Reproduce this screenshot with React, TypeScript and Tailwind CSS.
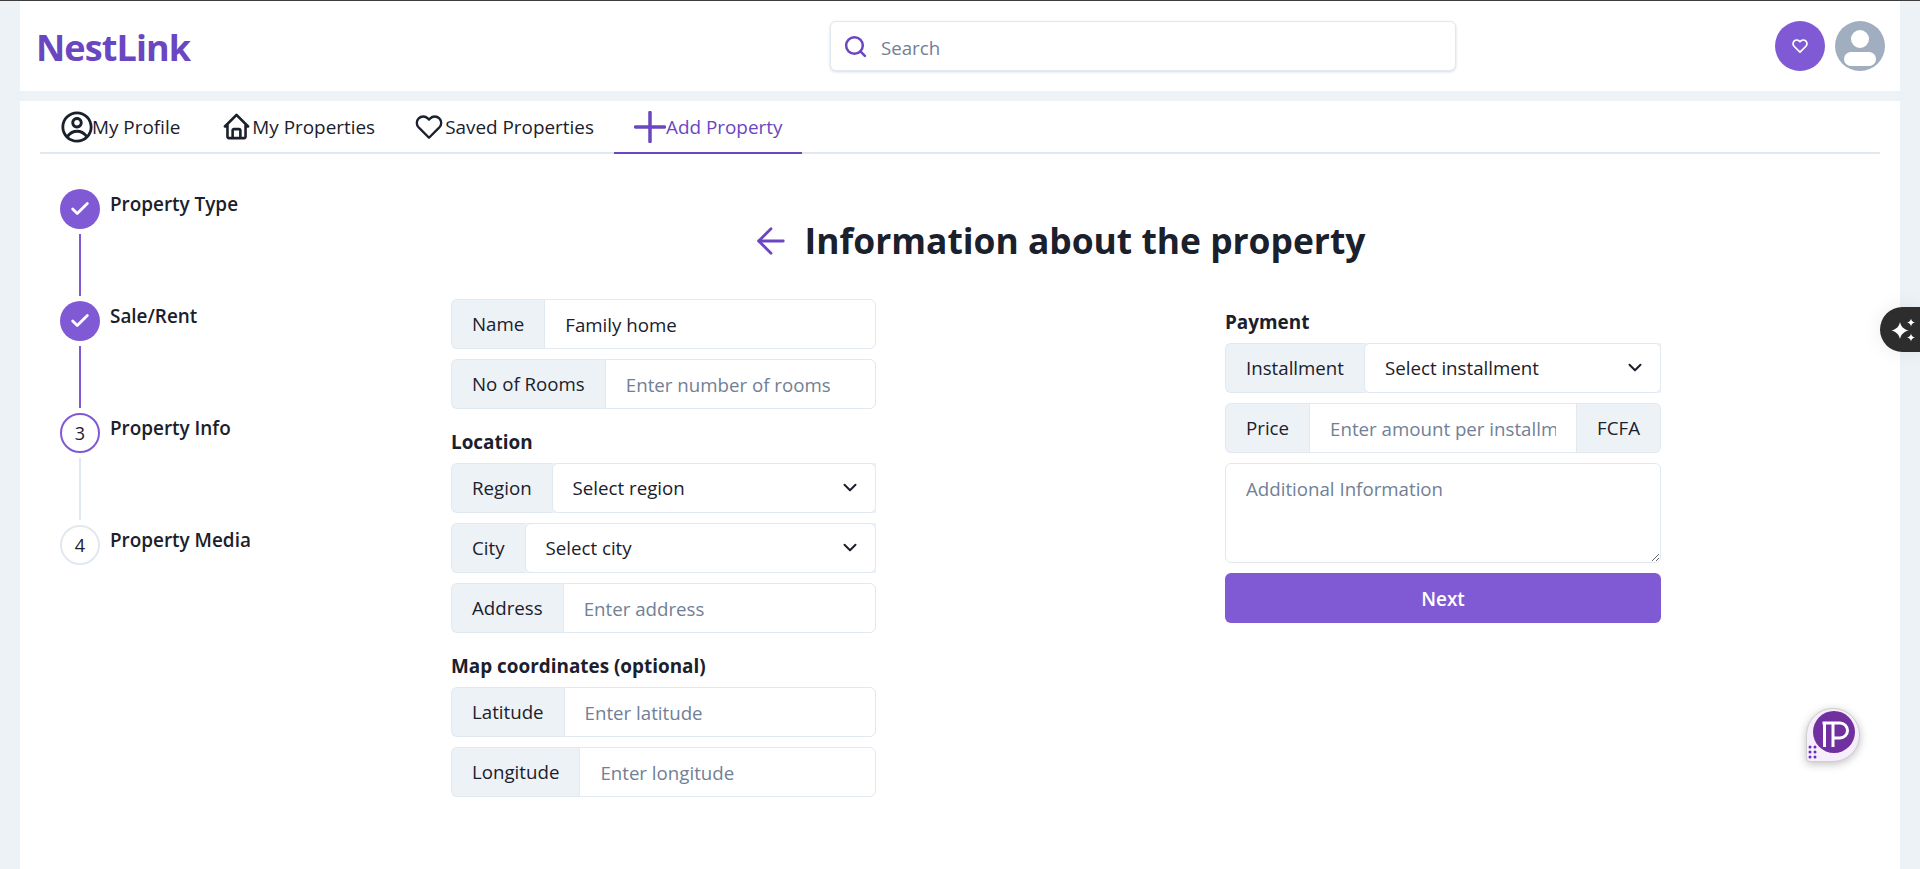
import { ChevronDown } from "lucide-react";
import { BiHome } from "react-icons/bi";
import { CgProfile } from "react-icons/cg";
import { FiArrowLeft, FiCheck, FiHeart, FiSearch } from "react-icons/fi";

const font = "font-['Open_Sans','Noto_Sans',sans-serif]";

function Addon({ children, right }: { children: React.ReactNode; right?: boolean }) {
  return (
    <div
      className={`flex h-full shrink-0 items-center border border-[#E2E8F0] bg-[#EDF2F7] px-5 text-[18.7px] text-[#1A202C] ${
        right ? "rounded-r-md border-l-0" : "rounded-l-md border-r-0"
      }`}
    >
      {children}
    </div>
  );
}

function TextRow({ label, placeholder, value, unit }: { label: string; placeholder: string; value?: string; unit?: string }) {
  return (
    <div className="flex h-[50px] w-full items-center">
      <Addon>{label}</Addon>
      <input
        readOnly
        value={value}
        placeholder={placeholder}
        className={`h-full w-full min-w-0 border border-[#E2E8F0] bg-white px-5 text-[18.7px] text-[#1A202C] outline-none placeholder:text-[#718096] ${
          unit ? "" : "rounded-r-md"
        }`}
      />
      {unit && <Addon right>{unit}</Addon>}
    </div>
  );
}

function SelectRow({ label, placeholder }: { label: string; placeholder: string }) {
  return (
    <div className="flex h-[50px] w-full items-center">
      <Addon>{label}</Addon>
      <div className="relative h-full w-full min-w-0 bg-[#EDF2F7]">
        <select className="h-full w-full appearance-none rounded-md border border-[#E2E8F0] bg-white px-5 text-[18.7px] text-[#1A202C] outline-none">
          <option>{placeholder}</option>
        </select>
        <ChevronDown size={22} strokeWidth={2.2} className="pointer-events-none absolute top-1/2 right-[15px] -translate-y-[52%] text-[#1A202C]" />
      </div>
    </div>
  );
}

function GroupLabel({ children, className }: { children: React.ReactNode; className?: string }) {
  return <p className={`-mb-0.5 text-[18.9px] leading-[26px] font-bold text-[#1A202C] ${className ?? ""}`}>{children}</p>;
}

const steps = [
  { title: "Property Type", state: "done", line: true },
  { title: "Sale/Rent", state: "done", line: true },
  { title: "Property Info", state: "active", line: false },
  { title: "Property Media", state: "todo", line: false },
];

function Stepper() {
  return (
    <div className="flex w-[431px] shrink-0 flex-col pt-[35px] pl-10">
      {steps.map((step, i) => (
        <div key={step.title} className="flex gap-2.5">
          <div className="flex flex-col items-center">
            {step.state === "done" ? (
              <div className="flex h-10 w-10 items-center justify-center rounded-full bg-[#805AD5] text-white">
                <FiCheck size={22} strokeWidth={3} />
              </div>
            ) : (
              <div
                className={`flex h-10 w-10 items-center justify-center rounded-full border-2 bg-white text-[18px] text-[#1A202C] ${
                  step.state === "active" ? "border-[#805AD5]" : "border-[#E2E8F0]"
                }`}
              >
                {i + 1}
              </div>
            )}
            {i < steps.length - 1 && (
              <div className={`my-[5px] h-[62px] w-0.5 ${step.line ? "bg-[#805AD5]" : "bg-[#E2E8F0]"}`} />
            )}
          </div>
          <p className="text-[18.9px] leading-[31px] font-semibold text-[#1A202C]">{step.title}</p>
        </div>
      ))}
    </div>
  );
}

function PlusIcon() {
  return (
    <svg width="32" height="32" viewBox="0 0 32 32" stroke="currentColor" strokeWidth="3.5" strokeLinecap="round">
      <path d="M1.5 16h29M16 1.5v29" />
    </svg>
  );
}

const tabs = [
  { label: "My Profile", icon: <CgProfile size={34} className="-mr-0.5" /> },
  { label: "My Properties", icon: <BiHome size={31} className="ml-px" /> },
  { label: "Saved Properties", icon: <FiHeart size={28} strokeWidth={2} className="mr-0.5" /> },
  { label: "Add Property", icon: <PlusIcon />, active: true },
];

function Tabs() {
  return (
    <div className="mx-5 flex h-[53px] items-stretch border-b-2 border-[#E2E8F0]">
      {tabs.map((tab) => (
        <div
          key={tab.label}
          className={`-mb-0.5 flex items-center border-b-2 px-5 text-[18.9px] ${
            tab.active ? "border-[#6B46C1] text-[#6B46C1]" : "border-transparent text-[#1A202C]"
          }`}
        >
          {tab.icon}
          <span className="pt-0.5">{tab.label}</span>
        </div>
      ))}
    </div>
  );
}

function Header() {
  return (
    <header className="flex h-[90px] items-center bg-white pr-[15px] pl-4">
      <span className="w-[794px] pt-1 text-[36px] font-bold tracking-tight text-[#6B46C1]">NestLink</span>
      <div className="flex h-[50px] w-[626px] items-center gap-[13px] rounded-md border border-[#E2E8F0] bg-white pl-3 shadow-[0_1px_3px_rgba(0,0,0,0.15)]">
        <FiSearch size={25} strokeWidth={2.4} className="shrink-0 text-[#6B46C1]" />
        <input readOnly placeholder="Search" className="w-full pt-1 text-[18.7px] outline-none placeholder:text-[#718096]" />
      </div>
      <div className="ml-auto flex items-center gap-2.5">
        <button className="flex h-[50px] w-[50px] items-center justify-center rounded-full bg-[#805AD5] text-white">
          <FiHeart size={16} strokeWidth={2.5} />
        </button>
        <div className="relative h-[50px] w-[50px] overflow-hidden rounded-full bg-[#A0AEC0]">
          <div className="absolute top-[9px] left-4 h-[18px] w-[18px] rounded-full bg-white" />
          <div className="absolute top-[31px] left-[9px] h-[14px] w-8 rounded-full bg-white" />
        </div>
      </div>
    </header>
  );
}

function InfoForm() {
  return (
    <div className="min-w-0 flex-1 pt-[61px]">
      <div className="flex h-[51px] items-center justify-center gap-[13px] pl-[3px]">
        <FiArrowLeft size={42} strokeWidth={1.6} className="text-[#6B46C1]" />
        <h1 className="text-[35.4px] font-bold text-[#1A202C]">Information about the property</h1>
      </div>
      <div className="mt-[33px] flex items-start justify-between">
        <div className="flex w-[425px] flex-col gap-2.5">
          <TextRow label="Name" placeholder="" value="Family home" />
          <TextRow label="No of Rooms" placeholder="Enter number of rooms" />
          <GroupLabel className="mt-2.5">Location</GroupLabel>
          <SelectRow label="Region" placeholder="Select region" />
          <SelectRow label="City" placeholder="Select city" />
          <TextRow label="Address" placeholder="Enter address" />
          <GroupLabel className="mt-2.5">Map coordinates (optional)</GroupLabel>
          <TextRow label="Latitude" placeholder="Enter latitude" />
          <TextRow label="Longitude" placeholder="Enter longitude" />
        </div>
        <div className="flex w-[436px] flex-col gap-2.5 pt-[10px]">
          <GroupLabel>Payment</GroupLabel>
          <SelectRow label="Installment" placeholder="Select installment" />
          <TextRow label="Price" placeholder="Enter amount per installment" unit="FCFA" />
          <textarea
            readOnly
            placeholder="Additional Information"
            className="h-[100px] w-full rounded-md border border-[#E2E8F0] px-5 pt-[11px] pb-2 text-[18.7px] outline-none placeholder:text-[#718096]"
          />
          <button className="h-[50px] rounded-md bg-[#805AD5] pt-0.5 text-[18.9px] font-semibold text-white">Next</button>
        </div>
      </div>
    </div>
  );
}

export default function App() {
  return (
    <div className={`relative flex min-h-screen flex-col overflow-hidden bg-[#EDF2F7] ${font}`}>
      <div className="h-px bg-[#3c3c3c]" />
      <div className="mx-5 flex flex-1 flex-col gap-2.5">
        <Header />
        <main className="flex-1 bg-white">
          <Tabs />
          <div className="flex pr-[239px]">
            <Stepper />
            <InfoForm />
          </div>
        </main>
      </div>

      <div className="absolute top-[307px] right-0 flex h-[45px] w-10 items-center rounded-l-full bg-[#2d2d2d] pl-2 shadow-[0_0_20px_rgba(0,0,0,0.08)]">
        <svg width="30" height="26" viewBox="0 0 30 26" fill="#fff" className="shrink-0">
          <path d="M12 5c.9 4.5 3.5 7 8.5 8.5-5 1.5-7.6 4-8.5 8.5-.9-4.5-3.5-7-8.5-8.5 5-1.5 7.6-4 8.5-8.5z" />
          <path d="M23 1.5c.4 2.2 1.3 3.3 4 4-2.7.7-3.6 1.8-4 4-.4-2.2-1.3-3.3-4-4 2.7-.7 3.6-1.8 4-4z" />
          <path d="M23 16.5c.4 2.2 1.3 3.3 4 4-2.7.7-3.6 1.8-4 4-.4-2.2-1.3-3.3-4-4 2.7-.7 3.6-1.8 4-4z" />
        </svg>
      </div>

      <div className="absolute top-[708px] left-[1806px] h-[54px] w-[54px] rounded-[50%_50%_50%_4px] border border-[#cfcfcf] bg-[#f6eefa] shadow-[0_2px_8px_rgba(0,0,0,0.25)]">
        <svg width="52" height="52" viewBox="0 0 52 52">
          <circle cx="27" cy="23" r="21" fill="#7030a0" />
          <path d="M15.5 14H33a7.5 7.5 0 0 1 0 15h-7M17.5 14v24M26 14v24" fill="none" stroke="#fff" strokeWidth="3" />
          <g fill="#6a2fc0">
            <circle cx="3" cy="38" r="1.5" />
            <circle cx="8" cy="38" r="1.5" />
            <circle cx="3" cy="43" r="1.5" />
            <circle cx="8" cy="43" r="1.5" />
            <circle cx="3" cy="48" r="1.5" />
            <circle cx="8" cy="48" r="1.5" />
          </g>
        </svg>
      </div>
    </div>
  );
}
